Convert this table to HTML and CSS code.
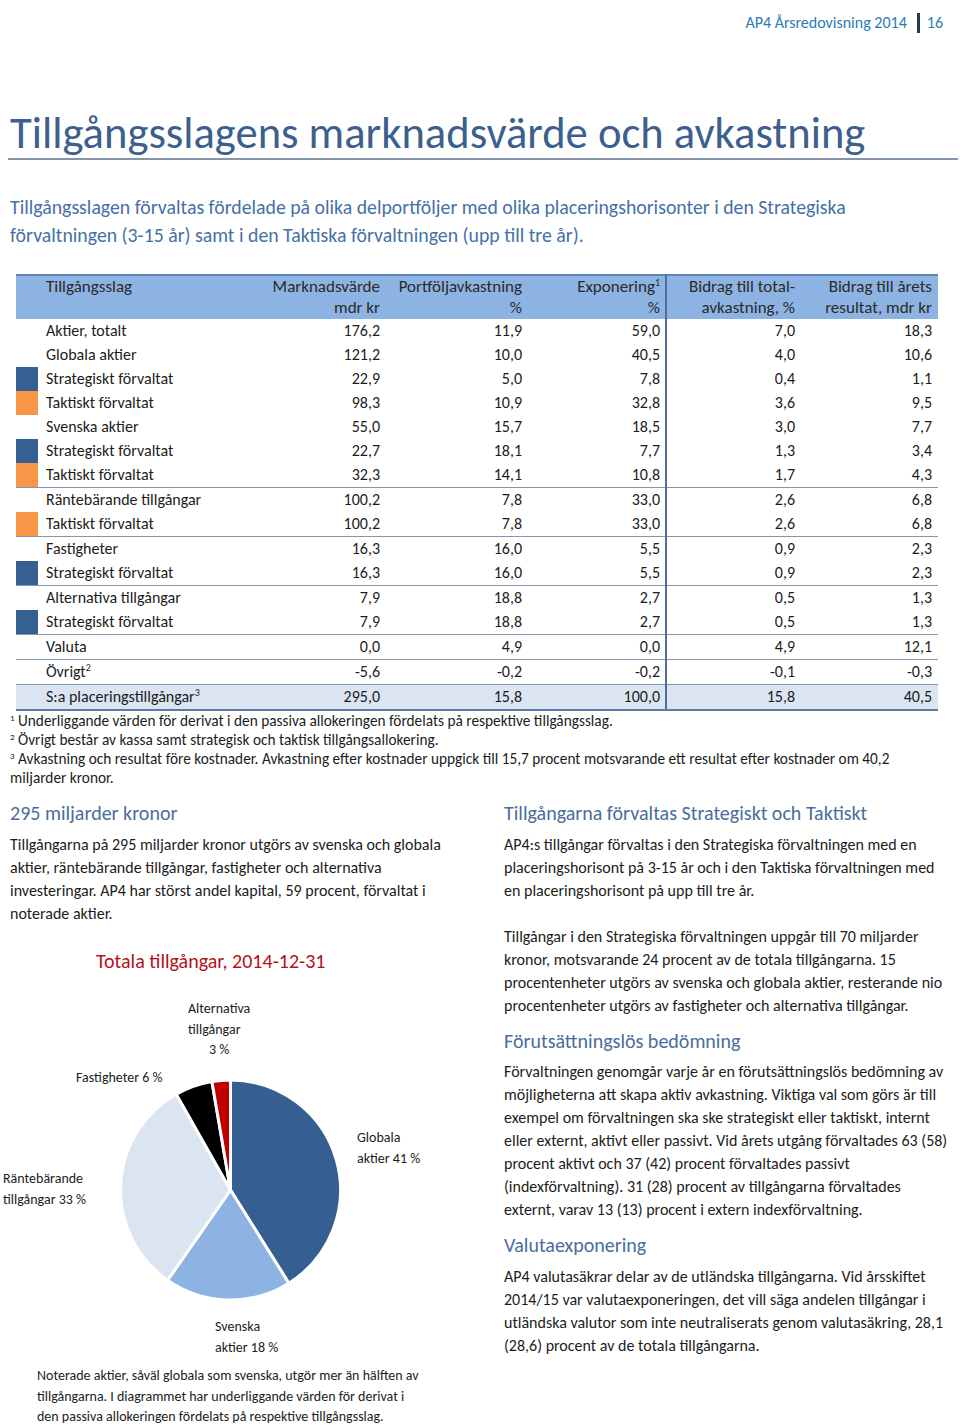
FILE: index.html
```html
<!DOCTYPE html>
<html lang="sv">
<head>
<meta charset="utf-8">
<title>Tillgångsslagens marknadsvärde och avkastning</title>
<link rel="stylesheet" href="styles.css">
</head>
<body>
<div class="page">
  <header class="topbar">
    <span class="doc">AP4 Årsredovisning 2014</span>
    <span class="sep"></span>
    <span class="pageno">16</span>
  </header>

  <h1 class="title">Tillgångsslagens marknadsvärde och avkastning</h1>

  <p class="intro">Tillgångsslagen förvaltas fördelade på olika delportföljer med olika placeringshorisonter i den Strategiska<br>förvaltningen (3-15 år) samt i den Taktiska förvaltningen (upp till tre år).</p>

  <table class="assets">
    <colgroup>
      <col class="c-sw"><col class="c-lbl"><col class="c-mv"><col class="c-pa"><col class="c-ex"><col class="c-bt"><col class="c-br">
    </colgroup>
    <thead>
      <tr>
        <th class="sw"></th>
        <th class="lbl">Tillgångsslag<br>&nbsp;</th>
        <th>Marknadsvärde<br>mdr kr</th>
        <th>Portföljavkastning<br>%</th>
        <th class="div">Exponering<sup>1</sup><br>%</th>
        <th>Bidrag till total-<br>avkastning, %</th>
        <th>Bidrag till årets<br>resultat, mdr kr</th>
      </tr>
    </thead>
    <tbody>
      <tr><td class="sw"></td><td class="lbl">Aktier, totalt</td><td>176,2</td><td>11,9</td><td class="div">59,0</td><td>7,0</td><td>18,3</td></tr>
      <tr><td class="sw"></td><td class="lbl">Globala aktier</td><td>121,2</td><td>10,0</td><td class="div">40,5</td><td>4,0</td><td>10,6</td></tr>
      <tr><td class="sw strat"></td><td class="lbl">Strategiskt förvaltat</td><td>22,9</td><td>5,0</td><td class="div">7,8</td><td>0,4</td><td>1,1</td></tr>
      <tr><td class="sw takt"></td><td class="lbl">Taktiskt förvaltat</td><td>98,3</td><td>10,9</td><td class="div">32,8</td><td>3,6</td><td>9,5</td></tr>
      <tr><td class="sw"></td><td class="lbl">Svenska aktier</td><td>55,0</td><td>15,7</td><td class="div">18,5</td><td>3,0</td><td>7,7</td></tr>
      <tr><td class="sw strat"></td><td class="lbl">Strategiskt förvaltat</td><td>22,7</td><td>18,1</td><td class="div">7,7</td><td>1,3</td><td>3,4</td></tr>
      <tr class="end"><td class="sw takt"></td><td class="lbl">Taktiskt förvaltat</td><td>32,3</td><td>14,1</td><td class="div">10,8</td><td>1,7</td><td>4,3</td></tr>
      <tr><td class="sw"></td><td class="lbl">Räntebärande tillgångar</td><td>100,2</td><td>7,8</td><td class="div">33,0</td><td>2,6</td><td>6,8</td></tr>
      <tr class="end"><td class="sw takt"></td><td class="lbl">Taktiskt förvaltat</td><td>100,2</td><td>7,8</td><td class="div">33,0</td><td>2,6</td><td>6,8</td></tr>
      <tr><td class="sw"></td><td class="lbl">Fastigheter</td><td>16,3</td><td>16,0</td><td class="div">5,5</td><td>0,9</td><td>2,3</td></tr>
      <tr class="end"><td class="sw strat"></td><td class="lbl">Strategiskt förvaltat</td><td>16,3</td><td>16,0</td><td class="div">5,5</td><td>0,9</td><td>2,3</td></tr>
      <tr><td class="sw"></td><td class="lbl">Alternativa tillgångar</td><td>7,9</td><td>18,8</td><td class="div">2,7</td><td>0,5</td><td>1,3</td></tr>
      <tr class="end"><td class="sw strat"></td><td class="lbl">Strategiskt förvaltat</td><td>7,9</td><td>18,8</td><td class="div">2,7</td><td>0,5</td><td>1,3</td></tr>
      <tr class="end"><td class="sw"></td><td class="lbl">Valuta</td><td>0,0</td><td>4,9</td><td class="div">0,0</td><td>4,9</td><td>12,1</td></tr>
      <tr class="end"><td class="sw"></td><td class="lbl">Övrigt<sup>2</sup></td><td>-5,6</td><td>-0,2</td><td class="div">-0,2</td><td>-0,1</td><td>-0,3</td></tr>
      <tr class="total"><td class="sw"></td><td class="lbl">S:a placeringstillgångar<sup>3</sup></td><td>295,0</td><td>15,8</td><td class="div">100,0</td><td>15,8</td><td>40,5</td></tr>
    </tbody>
  </table>

  <div class="notes">
    <p><sup>1</sup> Underliggande värden för derivat i den passiva allokeringen fördelats på respektive tillgångsslag.</p>
    <p><sup>2</sup> Övrigt består av kassa samt strategisk och taktisk tillgångsallokering.</p>
    <p><sup>3</sup> Avkastning och resultat före kostnader. Avkastning efter kostnader uppgick till 15,7 procent motsvarande ett resultat efter kostnader om 40,2<br>miljarder kronor.</p>
  </div>

  <div class="columns">
    <section class="col-left">
      <h2 class="sub">295 miljarder kronor</h2>
      <p class="body">Tillgångarna på 295 miljarder kronor utgörs av svenska och globala<br>aktier, räntebärande tillgångar, fastigheter och alternativa<br>investeringar. AP4 har störst andel kapital, 59 procent, förvaltat i<br>noterade aktier.</p>

      <h3 class="chart-title">Totala tillgångar, 2014-12-31</h3>
      <div class="chart">
        <svg class="pie" width="480" height="392" viewBox="0 0 480 392">
          <g stroke="#ffffff" stroke-width="3" stroke-linejoin="round">
            <path d="M230.5,216 L230.5,106 A110,110 0 0 1 288.86,309.25 Z" fill="#365f91"/>
            <path d="M230.5,216 L288.86,309.25 A110,110 0 0 1 167.54,306.2 Z" fill="#8db3e2"/>
            <path d="M230.5,216 L167.54,306.2 A110,110 0 0 1 176.3,120.28 Z" fill="#dbe5f1"/>
            <path d="M230.5,216 L176.3,120.28 A110,110 0 0 1 211.92,107.58 Z" fill="#000000"/>
            <path d="M230.5,216 L211.92,107.58 A110,110 0 0 1 230.5,106 Z" fill="#c00000"/>
          </g>
        </svg>
        <div class="lab lab-alt">Alternativa<br>tillgångar<br><span class="pct">3 %</span></div>
        <div class="lab lab-fast">Fastigheter 6 %</div>
        <div class="lab lab-glob">Globala<br>aktier 41 %</div>
        <div class="lab lab-rant">Räntebärande<br>tillgångar 33 %</div>
        <div class="lab lab-sven">Svenska<br>aktier 18 %</div>
      </div>
      <p class="chart-note">Noterade aktier, såväl globala som svenska, utgör mer än hälften av<br>tillgångarna. I diagrammet har underliggande värden för derivat i<br>den passiva allokeringen fördelats på respektive tillgångsslag.</p>
    </section>

    <section class="col-right">
      <h2 class="sub">Tillgångarna förvaltas Strategiskt och Taktiskt</h2>
      <p class="body">AP4:s tillgångar förvaltas i den Strategiska förvaltningen med en<br>placeringshorisont på 3-15 år och i den Taktiska förvaltningen med<br>en placeringshorisont på upp till tre år.</p>
      <p class="body gap">Tillgångar i den Strategiska förvaltningen uppgår till 70 miljarder<br>kronor, motsvarande 24 procent av de totala tillgångarna. 15<br>procentenheter utgörs av svenska och globala aktier, resterande nio<br>procentenheter utgörs av fastigheter och alternativa tillgångar.</p>

      <h2 class="sub">Förutsättningslös bedömning</h2>
      <p class="body">Förvaltningen genomgår varje år en förutsättningslös bedömning av<br>möjligheterna att skapa aktiv avkastning. Viktiga val som görs är till<br>exempel om förvaltningen ska ske strategiskt eller taktiskt, internt<br>eller externt, aktivt eller passivt. Vid årets utgång förvaltades 63 (58)<br>procent aktivt och 37 (42) procent förvaltades passivt<br>(indexförvaltning). 31 (28) procent av tillgångarna förvaltades<br>externt, varav 13 (13) procent i extern indexförvaltning.</p>

      <h2 class="sub">Valutaexponering</h2>
      <p class="body">AP4 valutasäkrar delar av de utländska tillgångarna. Vid årsskiftet<br>2014/15 var valutaexponeringen, det vill säga andelen tillgångar i<br>utländska valutor som inte neutraliserats genom valutasäkring, 28,1<br>(28,6) procent av de totala tillgångarna.</p>
    </section>
  </div>
</div>
</body>
</html>
```

FILE: styles.css
```css
html, body {
  margin: 0;
  padding: 0;
  background: #ffffff;
}

body {
  font-family: "Carlito", "Lato", "Open Sans", sans-serif;
  color: #1c1c1c;
}

.page {
  width: 960px;
  height: 1425px;
  overflow: hidden;
}

/* Top running header */
.topbar {
  display: flex;
  justify-content: flex-end;
  align-items: center;
  padding: 13px 17px 0 0;
  height: 20px;
  font-size: 16px;
  line-height: 20px;
  color: #2d7ab3;
}

.topbar .sep {
  display: inline-block;
  width: 3px;
  height: 20px;
  background: #2b3a4b;
  margin: 0 7px 0 10px;
}

/* Title */
.title {
  margin: 75px 2px 0 8px;
  padding-left: 2px;
  font-size: 44.6px;
  line-height: 50px;
  font-weight: normal;
  color: #3d5f8e;
  border-bottom: 2px solid #8394ac;
}

.intro {
  margin: 33px 0 0 0;
  padding-left: 10px;
  font-size: 19.8px;
  line-height: 28px;
  color: #4571a6;
  white-space: nowrap;
}

/* Table */
.assets {
  margin: 25px 0 0 16px;
  width: 922px;
  border-collapse: collapse;
  table-layout: fixed;
  font-size: 16px;
}

.c-sw { width: 22px; }
.c-lbl { width: 207px; }
.c-mv { width: 140px; }
.c-pa { width: 142px; }
.c-ex { width: 139px; }
.c-bt { width: 134px; }
.c-br { width: 138px; }

.assets th {
  background: #8db3e2;
  border-top: 2px solid #5f84b3;
  font-size: 17px;
  font-weight: normal;
  color: #2a2a2a;
  line-height: 21px;
  padding: 0 5px 1px 0;
  text-align: right;
  vertical-align: top;
  white-space: nowrap;
}

.assets th.lbl,
.assets td.lbl {
  text-align: left;
  padding-left: 8px;
}

.assets th.sw,
.assets td.sw {
  padding: 0;
}

.assets th:last-child,
.assets td:last-child {
  padding-right: 6px;
}

.assets td {
  height: 24px;
  line-height: 24px;
  padding: 0 5px 0 0;
  text-align: right;
  white-space: nowrap;
  color: #1c1c1c;
}

.assets .div {
  border-right: 2px solid #4f6f9c;
}

.assets td.strat { background: #376092; }
.assets td.takt { background: #f79646; }

.assets tr.end td {
  border-bottom: 1px solid #8596ae;
}

.assets tr.total td {
  background: #dbe5f1;
  border-bottom: 2px solid #5b7aa5;
}

.assets sup {
  font-size: 10px;
  line-height: 0;
  vertical-align: 6px;
}

/* Footnotes */
.notes {
  margin-top: 0;
  padding-left: 10px;
  font-size: 15.3px;
  line-height: 19px;
  color: #1c1c1c;
}

.notes p {
  margin: 0;
}

.notes sup {
  font-size: 9px;
  line-height: 0;
  vertical-align: 5px;
}

/* Two columns */
.columns {
  display: grid;
  grid-template-columns: 494px 1fr;
  margin-top: 13px;
}

.sub {
  margin: 0;
  font-size: 20px;
  line-height: 26px;
  font-weight: normal;
  color: #4a6d9c;
}

.col-left .sub,
.col-left .body {
  margin-left: 10px;
}

.col-right {
  padding-left: 10px;
}

.col-right .sub {
  margin-top: 11px;
}

.col-right .sub:first-child {
  margin-top: 0;
}

.body {
  margin: 6.5px 0 0 0;
  font-size: 16px;
  line-height: 23px;
  color: #1c1c1c;
  white-space: nowrap;
}

.body.gap {
  margin-top: 23px;
}

.chart-title {
  margin: 23.5px 0 0 96px;
  font-size: 20px;
  line-height: 26px;
  font-weight: normal;
  color: #b3121a;
}

.chart {
  position: relative;
  width: 480px;
  height: 392px;
}

.pie {
  position: absolute;
  left: 0;
  top: 0;
}

.lab {
  position: absolute;
  font-size: 14px;
  line-height: 20.5px;
  color: #1c1c1c;
  white-space: nowrap;
}

.lab-alt { left: 188px; top: 25px; }
.lab-alt .pct { padding-left: 21px; }
.lab-fast { left: 76px; top: 94px; }
.lab-glob { left: 357px; top: 154px; }
.lab-rant { left: 3px; top: 195px; }
.lab-sven { left: 215px; top: 343px; }

.chart-note {
  margin: 0 0 0 37px;
  font-size: 14px;
  line-height: 20.5px;
  color: #1c1c1c;
  white-space: nowrap;
}
```
